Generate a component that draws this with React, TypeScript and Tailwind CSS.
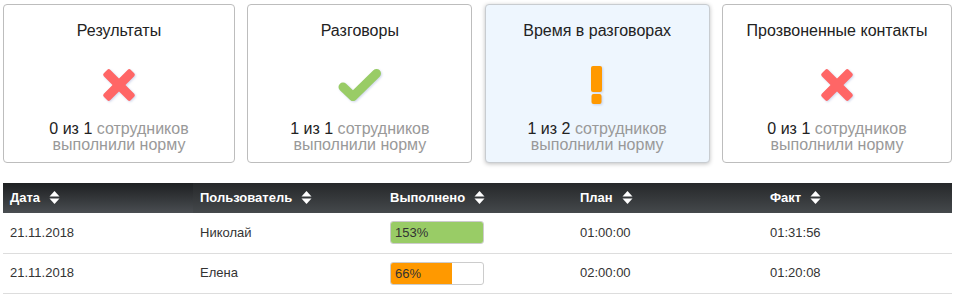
import React from "react";

type Status = "fail" | "ok" | "warn";

const cards: { title: string; done: number; total: number; status: Status; active?: boolean; width: string }[] = [
    { title: "Результаты", done: 0, total: 1, status: "fail", width: "w-[232px]" },
    { title: "Разговоры", done: 1, total: 1, status: "ok", width: "w-[225px]" },
    { title: "Время в разговорах", done: 1, total: 2, status: "warn", active: true, width: "w-[225px]" },
    { title: "Прозвоненные контакты", done: 0, total: 1, status: "fail", width: "w-[230px]" },
];

const rows = [
    { date: "21.11.2018", user: "Николай", pct: 153, plan: "01:00:00", fact: "01:31:56" },
    { date: "21.11.2018", user: "Елена", pct: 66, plan: "02:00:00", fact: "01:20:08" },
];

function StatusIcon({ status }: { status: Status }) {
    if (status === "fail") {
        return (
            <svg width="34" height="34" viewBox="0 0 34 34" className="drop-shadow-[1px_1px_1px_rgba(120,140,200,0.35)]">
                <rect x="12.5" y="-2" width="9" height="38" rx="2" fill="#ff6666" transform="rotate(45 17 17)" />
                <rect x="12.5" y="-2" width="9" height="38" rx="2" fill="#ff6666" transform="rotate(-45 17 17)" />
            </svg>
        );
    }
    if (status === "ok") {
        return (
            <svg width="44" height="34" viewBox="0 0 44 34" className="drop-shadow-[1px_1px_1px_rgba(120,140,200,0.35)]">
                <path d="M5 19 L15 28.5 L38.5 5.5" stroke="#99cc66" strokeWidth="9" strokeLinecap="round" strokeLinejoin="round" fill="none" />
            </svg>
        );
    }
    return (
        <svg width="16" height="40" viewBox="0 0 16 40" className="drop-shadow-[1px_1px_1px_rgba(120,140,200,0.35)]">
            <rect x="2" y="1" width="11" height="26" rx="2" fill="#ff9900" />
            <rect x="2.5" y="29" width="10" height="10" rx="2" fill="#ff9900" />
        </svg>
    );
}

function SortIcon() {
    return (
        <svg width="11" height="15" viewBox="0 0 11 15" className="inline-block ml-[9px] -mt-[2px] align-middle">
            <path d="M0.5 6.5 L5.5 1 L10.5 6.5 Z" fill="#fff" />
            <path d="M0.5 8.5 L5.5 14 L10.5 8.5 Z" fill="#fff" />
        </svg>
    );
}

export default function App() {
    return (
        <div className="w-[957px] h-[300px] bg-white font-['Liberation_Sans',Arial,sans-serif] text-[#222] overflow-hidden">
            <div className="flex justify-between pl-[3px] pr-[5px] pt-[4px]">
                {cards.map((card, i) => (
                    <div
                        key={i}
                        className={`${card.width} h-[159px] rounded-[4px] border flex flex-col items-center pt-[16px] ${card.active ? "bg-[#eef6fe] border-[#c8ccd0] shadow-[0_1px_4px_rgba(0,0,0,0.25)]" : "bg-white border-[#bdbdbd]"}`}
                    >
                        <div className="text-[16px] leading-5">{card.title}</div>
                        <div className="h-10 mt-[24px] flex items-center justify-center">
                            <StatusIcon status={card.status} />
                        </div>
                        <div className="mt-[16px] text-[16px] leading-4 text-center text-[#999]">
                            <span className="text-[#222]">{card.done} из {card.total}</span> сотрудников
                            <br />
                            выполнили норму
                        </div>
                    </div>
                ))}
            </div>

            <table className="mt-[20px] ml-[3px] w-[949px] table-fixed border-collapse text-[13px]">
                <thead>
                    <tr className="h-[30px] text-white font-bold text-left">
                        <th className="w-[190px] pl-[7px] bg-gradient-to-b from-[#1e2022] to-[#4a4e52]">Дата<SortIcon /></th>
                        <th className="w-[190px] pl-[7px] bg-gradient-to-b from-[#26282a] to-[#45494c]">Пользователь<SortIcon /></th>
                        <th className="w-[190px] pl-[7px] bg-gradient-to-b from-[#26282a] to-[#45494c]">Выполнено<SortIcon /></th>
                        <th className="w-[190px] pl-[7px] bg-gradient-to-b from-[#26282a] to-[#45494c]">План<SortIcon /></th>
                        <th className="pl-[7px] bg-gradient-to-b from-[#26282a] to-[#45494c]">Факт<SortIcon /></th>
                    </tr>
                </thead>
                <tbody className="text-[#333]">
                    {rows.map((r, i) => (
                        <tr key={i} className="h-[40px] border-b border-[#dddddd]">
                            <td className="pl-[7px]">{r.date}</td>
                            <td className="pl-[7px]">{r.user}</td>
                            <td className="pl-[7px]">
                                <div className="relative w-[94px] h-[23px] rounded-[3px] border border-[#cccccc] bg-white overflow-hidden">
                                    <div
                                        className={`h-full ${r.pct >= 100 ? "bg-[#99cc66]" : "bg-[#ff9900]"}`}
                                        style={{ width: `${Math.min(r.pct, 100)}%` }}
                                    />
                                    <span className="absolute left-[4px] top-0 leading-[21px] text-[#333]">{r.pct}%</span>
                                </div>
                            </td>
                            <td className="pl-[7px]">{r.plan}</td>
                            <td className="pl-[7px]">{r.fact}</td>
                        </tr>
                    ))}
                </tbody>
            </table>
        </div>
    );
}
